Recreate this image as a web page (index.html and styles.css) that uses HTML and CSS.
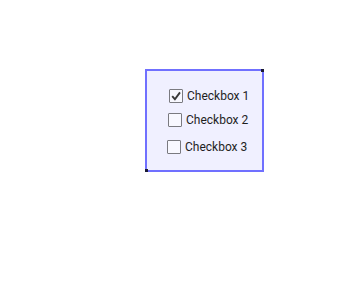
FILE: index.html
```html
<!DOCTYPE html>
<html>
<head>
<meta charset="utf-8">
<link rel="stylesheet" href="styles.css">
</head>
<body>
<div class="box">
  <span class="handle handle-tr"></span>
  <span class="handle handle-bl"></span>
  <label class="row row-1">
    <span class="check checked">
      <svg viewBox="0 0 14 14" width="14" height="14"><path d="M3.2 7.2 L5.9 10.2 L11 3.4" fill="none" stroke="#3a3a3a" stroke-width="1.9" stroke-linejoin="miter" stroke-linecap="butt"/></svg>
    </span>
    <span class="text">Checkbox 1</span>
  </label>
  <label class="row row-2">
    <span class="check"></span>
    <span class="text">Checkbox 2</span>
  </label>
  <label class="row row-3">
    <span class="check"></span>
    <span class="text">Checkbox 3</span>
  </label>
</div>
</body>
</html>
```
FILE: styles.css
```css
html, body {
  margin: 0;
  padding: 0;
  background: #ffffff;
}
body {
  font-family: Roboto, "Liberation Sans", sans-serif;
  width: 350px;
  height: 300px;
}
.box {
  position: relative;
  box-sizing: border-box;
  margin: 69px 0 0 145px;
  width: 119px;
  height: 103px;
  border: 2px solid #7070ff;
  background: #f0f0ff;
  display: flex;
  flex-direction: column;
  padding-top: 18px;
}
.handle {
  position: absolute;
  width: 3px;
  height: 3px;
  background: #1a1a33;
}
.handle-tr {
  top: -2px;
  right: -2px;
}
.handle-bl {
  bottom: -2px;
  left: -2px;
}
.row {
  display: flex;
  align-items: center;
  gap: 4px;
  height: 14px;
  font-size: 12px;
  color: #1e1e1e;
}
.row-1 { margin-left: 22px; }
.row-2 { margin-left: 21px; margin-top: 10px; }
.row-3 { margin-left: 20px; margin-top: 13px; }
.check {
  position: relative;
  box-sizing: border-box;
  width: 14px;
  height: 14px;
  border: 1.5px solid #7a7a80;
  border-radius: 1px;
  background: #f8f8ff;
  flex: none;
}
.check svg {
  position: absolute;
  left: -1.5px;
  top: -1.5px;
  display: block;
}
.text {
  line-height: 14px;
  white-space: nowrap;
}
```
